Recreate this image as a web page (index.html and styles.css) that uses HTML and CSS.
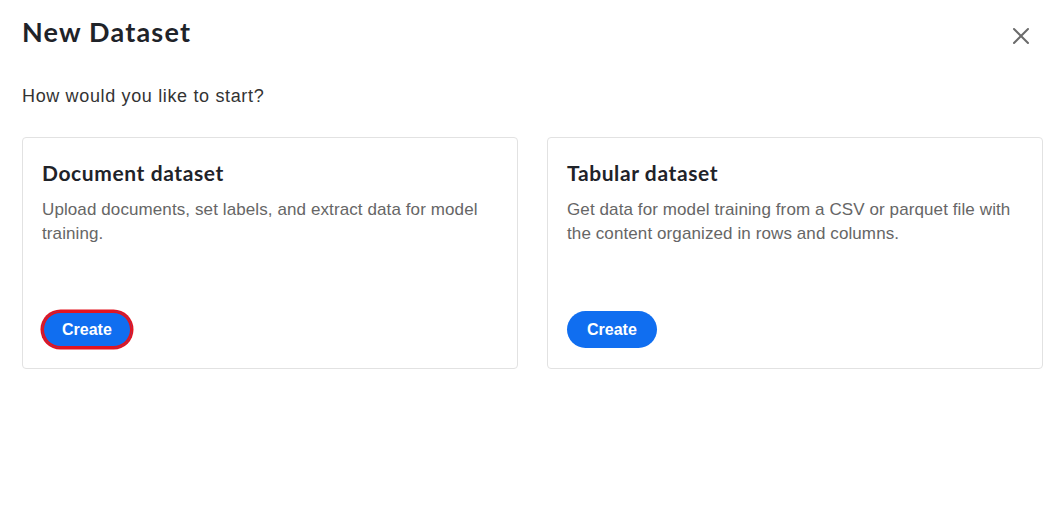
FILE: index.html
```html
<!DOCTYPE html>
<html lang="en">
<head>
    <meta charset="UTF-8">
    <meta name="viewport" content="width=device-width, initial-scale=1.0">
    <title>New Dataset</title>
    <link rel="stylesheet" href="styles.css">
</head>
<body>
    <div class="dialog">
        <div class="dialog-header">
            <h1 class="dialog-title">New Dataset</h1>
            <button class="close-btn" aria-label="Close">
                <svg width="18" height="18" viewBox="0 0 18 18">
                    <path d="M2 2 L16 16 M16 2 L2 16" stroke="#6b6b6b" stroke-width="2" stroke-linecap="round"/>
                </svg>
            </button>
        </div>
        <p class="dialog-intro">How would you like to start?</p>
        <div class="options">
            <div class="option-card">
                <h2 class="option-title">Document dataset</h2>
                <p class="option-desc">Upload documents, set labels, and extract data for model training.</p>
                <button class="create-btn focused">Create</button>
            </div>
            <div class="option-card">
                <h2 class="option-title">Tabular dataset</h2>
                <p class="option-desc">Get data for model training from a CSV or parquet file with the content organized in rows and columns.</p>
                <button class="create-btn">Create</button>
            </div>
        </div>
    </div>
</body>
</html>
```

FILE: styles.css
```css
body {
    margin: 0;
    padding: 0;
    background-color: #fff;
    font-family: "Liberation Sans", Arial, sans-serif;
    color: #333;
}

.dialog {
    padding: 14px 20px 0 22px;
}

.dialog-header {
    display: flex;
    justify-content: space-between;
    align-items: flex-start;
}

.dialog-title {
    margin: 0;
    font-family: "Lato", sans-serif;
    font-weight: 700;
    font-size: 27px;
    letter-spacing: 1.2px;
    line-height: 36px;
    color: #1f2329;
}

.close-btn {
    margin: 13px 13px 0 0;
    padding: 0;
    background: none;
    border: none;
    cursor: pointer;
    width: 18px;
    height: 18px;
}

/* 18px Arial, spaced out a little like the Windows rendering */
.dialog-intro {
    margin: 34px 0 0;
    font-size: 18px;
    letter-spacing: 0.65px;
    line-height: 24px;
    color: #333;
}

.options {
    display: grid;
    grid-template-columns: 1fr 1fr;
    gap: 29px;
    margin-top: 29px;
}

.option-card {
    display: flex;
    flex-direction: column;
    height: 232px;
    box-sizing: border-box;
    padding: 20px 19px 20px 19px;
    border: 1px solid #e2e2e2;
    border-radius: 4px;
}

.option-title {
    margin: 0;
    font-family: "Lato", sans-serif;
    font-weight: 700;
    font-size: 21px;
    letter-spacing: 0.6px;
    line-height: 30px;
    color: #1f2329;
}

.option-desc {
    margin: 10px 0 0;
    font-size: 17px;
    letter-spacing: 0.1px;
    line-height: 24px;
    color: #666;
}

.create-btn {
    margin-top: auto;
    align-self: flex-start;
    height: 37px;
    padding: 0 20px;
    background-color: #106ef0;
    color: white;
    border: none;
    border-radius: 19px;
    font-family: "Liberation Sans", Arial, sans-serif;
    font-weight: 700;
    font-size: 16px;
    cursor: pointer;
}

/* focus ring on the first card's button */
.create-btn.focused {
    box-shadow: inset 0 0 0 2px #e3141f, 0 0 0 1.5px #e3141f;
}
```
